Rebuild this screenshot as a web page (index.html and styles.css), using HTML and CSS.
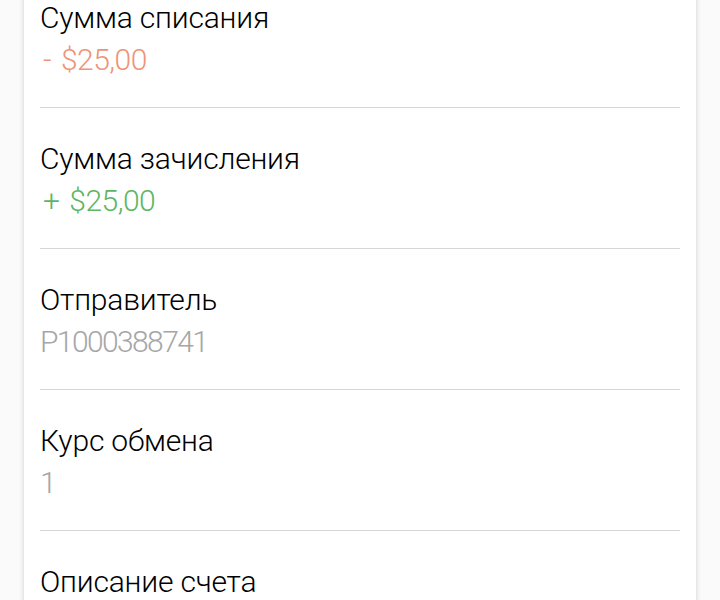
FILE: index.html
```html
<!DOCTYPE html>
<html lang="ru">
<head>
  <meta charset="UTF-8">
  <meta name="viewport" content="width=device-width, initial-scale=1.0">
  <title>Детали операции</title>
  <link rel="stylesheet" href="styles.css">
</head>
<body>
  <div class="card">
    <div class="row">
      <div class="label">Сумма списания</div>
      <div class="value amount debit">- $25,00</div>
    </div>
    <div class="row">
      <div class="label">Сумма зачисления</div>
      <div class="value amount credit">+ $25,00</div>
    </div>
    <div class="row">
      <div class="label">Отправитель</div>
      <div class="value">P1000388741</div>
    </div>
    <div class="row">
      <div class="label">Курс обмена</div>
      <div class="value">1</div>
    </div>
    <div class="row">
      <div class="label">Описание счета</div>
      <div class="value">&nbsp;</div>
    </div>
  </div>
</body>
</html>
```

FILE: styles.css
```css
body {
  margin: 0;
  background-color: #fafafa;
  font-family: Roboto, "Noto Sans", sans-serif;
  overflow: hidden;
}
.card {
  margin: -33px 24px 0;
  padding: 0 16px;
  background-color: #fff;
  box-shadow: 0 0 5px rgba(0, 0, 0, 0.18);
}
.row {
  padding: 30px 0 26px;
  border-bottom: 1px solid #d6d6d6;
}
.label {
  font-size: 30px;
  line-height: 42px;
  font-weight: 300;
  letter-spacing: -0.2px;
  color: #000;
}
.value {
  font-size: 30px;
  line-height: 42px;
  font-weight: 300;
  letter-spacing: -1.6px;
  color: #a6a6a6;
}
.amount {
  padding-left: 3px;
  letter-spacing: -0.5px;
  word-spacing: 3px;
}
.debit {
  color: #ef937a;
}
.credit {
  color: #5cb662;
}
```
